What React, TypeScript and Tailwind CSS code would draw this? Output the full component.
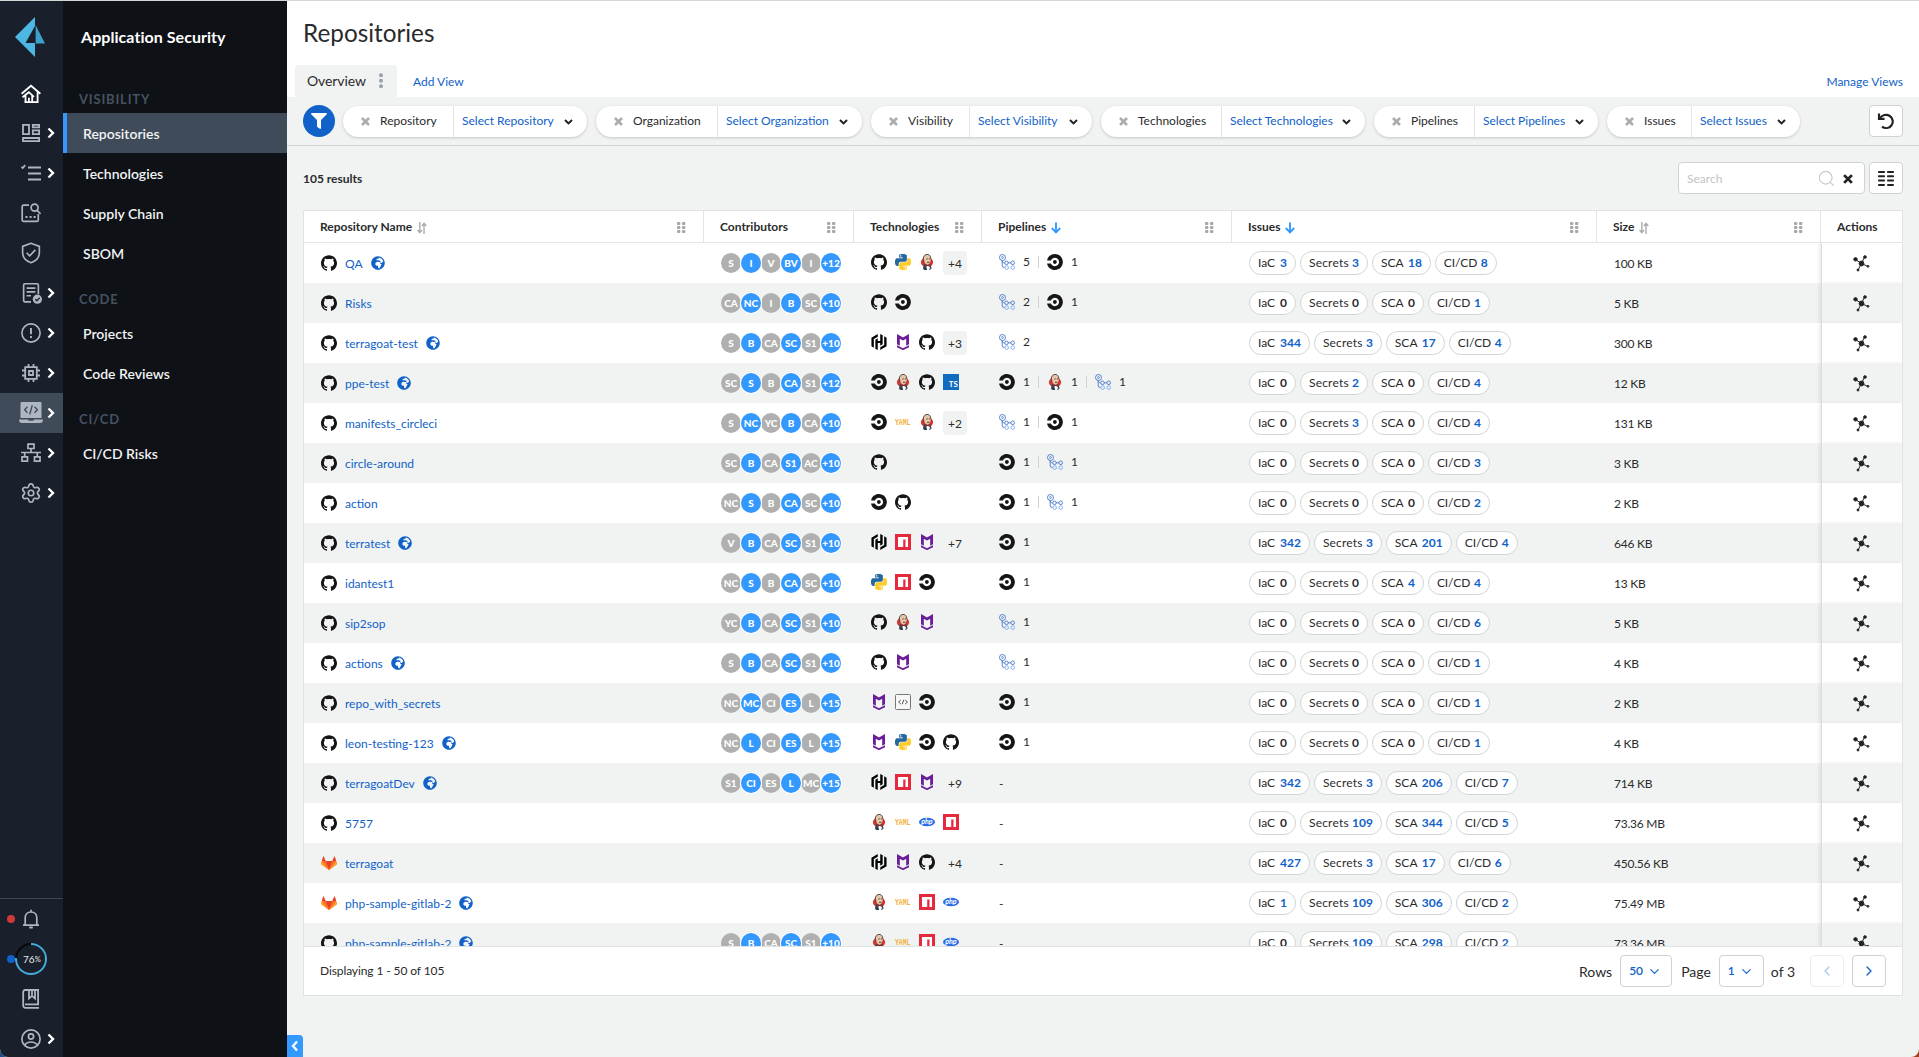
import React from "react";
import { SiHashicorp, SiCircleci, SiGithub } from "react-icons/si";
import { FaGlobeAfrica, FaFilter } from "react-icons/fa";
import { ChevronDown, ChevronLeft, ChevronRight, Search, Settings } from "lucide-react";

type P = { children: React.ReactNode; size?: number; sw?: number };
const Line = ({ children, size = 20, sw = 1.7 }: P) => (
  <svg width={size} height={size} viewBox="0 0 20 20" fill="none" stroke="currentColor" strokeWidth={sw} className="shrink-0">
    {children}
  </svg>
);

const Arrow = () => (
  <svg width="8" height="12" viewBox="0 0 8 12" fill="none" stroke="#fff" strokeWidth="2.4" className="ml-1 shrink-0">
    <path d="M1.500 1.500 6 6l-4.500 4.500" />
  </svg>
);

const Cross = ({ size, className }: { size: number; className?: string }) => (
  <svg width={size} height={size} viewBox="0 0 9 9" fill="none" stroke="currentColor" strokeWidth="2.500" className={`shrink-0 ${className ?? ""}`}>
    <path d="m1 1 7 7M8 1 1 8" />
  </svg>
);

const RAIL: { icon: React.ReactNode; arrow?: boolean; active?: boolean; white?: boolean }[] = [
  {
    white: true,
    icon: (
      <span className="pt-px">
        <Line sw={1.8}>
          <path d="M0.600 9.800 10 1.800l9.400 8M16.600 8v10.200H3.600" />
          <path d="M1.500 13.200 7.800 8.200l5.200 4.600M4.500 11.500v6.700M11.200 11.500v6.700M7.900 13.800v4.400" />
        </Line>
      </span>
    ),
  },
  {
    arrow: true,
    icon: (
      <Line sw={1.8}>
        <path d="M2 1.900h6v9.200H2zM11.800 1.900h6.300v2.400h-6.300zM11.800 7.400h6.300v3.700h-6.300zM2 15h16.100v3.200H2z" />
      </Line>
    ),
  },
  {
    arrow: true,
    icon: (
      <Line sw={1.8}>
        <path d="M7 4.500h13M7 10.500h13M7 16.500h13M0.400 4l1.300 1L4.200 2.200" />
      </Line>
    ),
  },
  {
    icon: (
      <Line sw={1.7}>
        <path d="M8 2.200H2.400a1.200 1.200 0 0 0-1.200 1.200v13.700a1.200 1.200 0 0 0 1.200 1.200h13.700a1.200 1.200 0 0 0 1.200-1.200V11" />
        <circle cx="13.600" cy="4.600" r="3.500" />
        <path d="M16 7.200 19.600 11" />
        <path d="M4.500 14h2M8.600 14h2M12.600 14h2" strokeWidth="2" />
      </Line>
    ),
  },
  {
    icon: (
      <Line size={22} sw={1.5}>
        <path d="M10 1.200 2.400 4v5.600c0 4.300 3 7.600 7.600 9.200 4.600-1.600 7.600-4.900 7.600-9.200V4z" />
        <path d="m6 9.800 2.800 2.700 5.200-5.300" />
      </Line>
    ),
  },
  {
    arrow: true,
    icon: (
      <Line size={22} sw={1.5}>
        <path d="M10 18H4.500A1.200 1.200 0 0 1 3.300 16.800V2.800A1.200 1.200 0 0 1 4.500 1.600h11a1.200 1.200 0 0 1 1.200 1.200v8M6 5.500h8M6 9h8M6 12.500h4" />
        <circle cx="15.800" cy="15.600" r="4.200" fill="currentColor" stroke="none" />
        <path d="m13.900 15.600 1.400 1.400 2.600-2.600" stroke="#19202b" strokeWidth="1.200" />
      </Line>
    ),
  },
  {
    arrow: true,
    icon: (
      <Line sw={1.6}>
        <circle cx="10" cy="10" r="9.100" />
        <path d="M10 5v6.200M10 13v2" strokeWidth="1.900" />
      </Line>
    ),
  },
  {
    arrow: true,
    icon: (
      <Line sw={1.8}>
        <path d="M4.200 4.200h11.600v11.600H4.200zM8 8h4v4H8z" />
        <path d="M7.500 1v3M12.500 1v3M7.500 16v3M12.500 16v3M1 7.500h3M1 12.500h3M16 7.500h3M16 12.500h3" />
      </Line>
    ),
  },
  {
    arrow: true,
    active: true,
    icon: (
      <svg width="24" height="22" viewBox="0 0 24 22" fill="none" className="shrink-0">
        <path d="M2.500 0h19a1 1 0 0 1 1 1v15h-21V1a1 1 0 0 1 1-1z" fill="#aeb6c4" />
        <path d="M0 17.500h9c.300 1 .800 1.200 1.500 1.200h3c.700 0 1.200-.200 1.500-1.200h9c0 2.500-1 3.500-3 3.500H3c-2 0-3-1-3-3.500z" fill="#aeb6c4" />
        <path d="M8.500 4.800 5.600 7.800l2.900 3M15.500 4.800l2.900 3-2.900 3M13.300 3.300l-2.600 9.200" stroke="#404b5a" strokeWidth="1.300" />
      </svg>
    ),
  },
  {
    arrow: true,
    icon: (
      <Line sw={1.7}>
        <path d="M7 1.200h6v4.300H7zM1 13.800h5.500v4.300H1zM13.500 13.800H19v4.300h-5.500zM10 5.500v4M0 9.500h20M3.700 9.500v4M16.300 9.500v4" />
      </Line>
    ),
  },
  { arrow: true, icon: <Settings size={22} strokeWidth={1.8} className="shrink-0" /> },
];

const RailItem = ({ icon, arrow, active, white }: { icon: React.ReactNode; arrow?: boolean; active?: boolean; white?: boolean }) => (
  <div className={`flex h-10 items-center ${active ? "bg-[#404b5a]" : ""} ${white ? "text-white" : "text-[#aeb6c4]"}`}>
    <div className="ml-[19px] flex w-6 justify-center">{icon}</div>
    {arrow && <Arrow />}
  </div>
);

const Rail = () => (
  <div className="flex w-[63px] shrink-0 flex-col justify-between bg-[#19202b]">
    <div className="flex flex-col">
      <svg width="30" height="40" viewBox="0 0 30 40" className="ml-[15px] mt-4">
        <path d="M20 0v9L10.500 26H20v14L0 20z" fill="#4db6e2" />
        <path d="M20.600 8 30 26.500h-9.400z" fill="#3d9fcb" />
      </svg>
      <div className="mt-4">
        {RAIL.map((r, i) => (
          <RailItem key={i} {...r} />
        ))}
      </div>
    </div>
    <div className="-mb-0.5 border-t border-[#3d4858]">
      <div className="flex h-10 items-center text-[#aeb6c4]">
        <span className="ml-[7px] size-2 rounded-full bg-[#cf3a38]" />
        <div className="ml-1 flex w-6 justify-center">
          <Line>
            <path d="M2 16.200h16M4.200 16V8.800C4.200 5.500 6.500 3 10 3s5.800 2.500 5.800 5.800V16M10 3V.8" />
            <path d="M8.200 18.500h3.600" strokeWidth="2" />
          </Line>
        </div>
      </div>
      <div className="flex h-10 items-center">
        <span className="ml-[7px] size-2 rounded-full bg-[#1062c8]" />
        <svg width="32" height="32" viewBox="0 0 32 32" fill="none">
          <circle cx="16" cy="16" r="15" stroke="#05070a" strokeWidth="2" />
          <circle cx="16" cy="16" r="15" stroke="#45aedd" strokeWidth="2" pathLength="100" strokeDasharray="76 24" transform="rotate(-90 16 16)" />
          <text x="8" y="20" fontSize="10" fill="#e8ebef" fontFamily="Lato, sans-serif">76</text>
          <text x="19.800" y="19" fontSize="7.500" fill="#e8ebef" fontFamily="Lato, sans-serif">%</text>
        </svg>
      </div>
      <div className="flex h-10 items-center text-[#aeb6c4]">
        <div className="ml-[19px] flex w-6 justify-center">
          <Line sw={1.8}>
            <path d="M18 18.800H4.200a2 2 0 0 1-2-2V3a2 2 0 0 1 2-2h12.900v14.300H4M8 1.500v8l3-2.600 3 2.600v-8M11 1v5" />
          </Line>
        </div>
      </div>
      <div className="flex h-10 items-center text-[#aeb6c4]">
        <div className="ml-[19px] flex w-6 justify-center">
          <Line sw={1.7}>
            <circle cx="10" cy="10" r="9.100" />
            <circle cx="10" cy="7.500" r="2.600" />
            <path d="M3.500 16.200c1.500-2.200 4-3.200 6.500-3.200s5 1 6.500 3.200" />
          </Line>
        </div>
        <Arrow />
      </div>
    </div>
  </div>
);

const NavItem = ({ label, active }: { label: string; active?: boolean }) => (
  <div className={`flex h-10 items-center border-l-4 pl-4 text-[14px] font-semibold text-[#f1f3f4] ${active ? "border-[#3399ff] bg-[#404b5a]" : "border-transparent"}`}>{label}</div>
);
const NavHead = ({ label }: { label: string }) => (
  <div className="flex h-10 items-center pl-4 text-[13px] font-bold tracking-[0.8px] text-[#465160]">{label}</div>
);

const NAV: [string, string[]][] = [
  ["VISIBILITY", ["Repositories", "Technologies", "Supply Chain", "SBOM"]],
  ["CODE", ["Projects", "Code Reviews"]],
  ["CI/CD", ["CI/CD Risks"]],
];

const SideNav = () => (
  <div className="w-[224px] shrink-0 bg-[#0e1116]">
    <div className="flex h-[72px] items-center pl-[18px] text-[16px] font-bold tracking-[0.05px] text-white">Application Security</div>
    {NAV.map(([head, items]) => (
      <div key={head} className="pt-[7px]">
        <NavHead label={head} />
        <div className="-mt-[7px]">
          {items.map((l) => (
            <NavItem key={l} label={l} active={l === "Repositories"} />
          ))}
        </div>
      </div>
    ))}
  </div>
);

const FILTERS: [string, number, number][] = [
  ["Repository", 111, 133],
  ["Organization", 122, 144],
  ["Visibility", 99, 122],
  ["Technologies", 121, 143],
  ["Pipelines", 101, 123],
  ["Issues", 85, 108],
];

const Filter = ({ label, w1, w2 }: { label: string; w1: number; w2: number }) => (
  <div className="flex h-[31px] items-center rounded-full bg-white shadow-[0_1px_3px_rgba(0,0,0,0.18)]">
    <div className="flex h-full items-center border-r border-[#e3e6e5] pl-[18px]" style={{ width: w1 }}>
      <Cross size={9} className="text-[#a9abac]" />
      <span className="ml-[10px]">{label}</span>
    </div>
    <div className="flex h-full items-center justify-between pl-2 pr-[14px]" style={{ width: w2 }}>
      <span className="text-[#1062c8]">Select {label}</span>
      <svg width="9" height="6" viewBox="0 0 9 6" fill="none" stroke="#222" strokeWidth="2" className="mt-0.5">
        <path d="m1 1 3.500 3.400L8 1" />
      </svg>
    </div>
  </div>
);

const Dots = () => (
  <svg width="9" height="12" viewBox="0 0 9 12" fill="#a6a8a9">
    {[0, 4, 8].map((y) => (
      <g key={y}>
        <rect x="0" y={y} width="3.400" height="3" rx="1" />
        <rect x="5" y={y} width="3.400" height="3" rx="1" />
      </g>
    ))}
  </svg>
);
const SortBoth = () => (
  <svg width="10" height="12" viewBox="0 0 10 12" fill="none" stroke="#aaacad" strokeWidth="1.400">
    <path d="M2.800 0v10.500M.5 8l2.300 2.600L5 8M7 12V1.500M4.800 4 7 1.400 9.300 4" />
  </svg>
);
const SortDown = () => (
  <svg width="10" height="12" viewBox="0 0 10 12" fill="none" stroke="#3399ff" strokeWidth="1.900">
    <path d="M5 .5v10M.8 6 5 10.300 9.200 6" />
  </svg>
);

const PY =
  "M14.25.18l.9.2.73.26.59.3.45.32.34.34.25.34.16.33.1.3.04.26.02.2-.01.13V8.5l-.05.63-.13.55-.21.46-.26.38-.3.31-.33.25-.35.19-.35.14-.33.1-.3.07-.26.04-.21.02H8.77l-.69.05-.59.14-.5.22-.41.27-.33.32-.27.35-.2.36-.15.37-.1.35-.07.32-.04.27-.02.21v3.06H3.17l-.21-.03-.28-.07-.32-.12-.35-.18-.36-.26-.36-.36-.35-.46-.32-.59-.28-.73-.21-.88-.14-1.05-.05-1.23.06-1.22.16-1.04.24-.87.32-.71.36-.57.4-.44.42-.33.42-.24.4-.16.36-.1.32-.05.24-.01h.16l.06.01h8.16v-.83H6.18l-.01-2.75-.02-.37.05-.34.11-.31.17-.28.25-.26.31-.23.38-.2.44-.18.51-.15.58-.12.64-.1.71-.06.77-.04.84-.02 1.27.05zm-6.3 1.98l-.23.33-.08.41.08.41.23.34.33.22.41.09.41-.09.33-.22.23-.34.08-.41-.08-.41-.23-.33-.33-.22-.41-.09-.41.09z";

const Icon = ({ k }: { k: string }) => {
  switch (k) {
    case "gh":
      return <SiGithub size={16} color="#161514" />;
    case "ci":
      return <SiCircleci size={16} color="#161616" />;
    case "ha":
      return <SiHashicorp size={16} color="#000" />;
    case "mc":
      return (
        <svg width="16" height="16" viewBox="0 0 16 16" fill="#6a1b9a">
          <path d="M2 0 8 3.600 14 0v10.200l-2.800 1.500V4.800L8 6.600 4.800 4.800v6.900L2 10.200z" />
          <path d="m2 11.200 6 3 6-3v2L8 16.200l-6-3z" />
        </svg>
      );
    case "py":
      return (
        <svg width="16" height="16" viewBox="0 0 24 24">
          <path d={PY} fill="#2369a0" />
          <path d={PY} fill="#ffcc2e" transform="rotate(180 12 12)" />
        </svg>
      );
    case "je":
      return (
        <svg width="16" height="16" viewBox="0 0 16 16">
          <ellipse cx="8" cy="8.300" rx="6.100" ry="5" fill="#cf3732" />
          <path d="M4 14.500 4.800 10.500h6.600l1.200 3.500L11 16H5.200z" fill="#2f4350" />
          <path d="M7.200 12h3.200l.6 2-.9 2H8.200z" fill="#fff" />
          <path d="M4.500 4.500C4.500 1.800 6 .4 8.200.4s3.500 1.600 3.500 4c0 3-.8 5.600-3.100 6.400C6.400 10.200 4.500 8 4.500 4.500z" fill="#e6c5a8" />
          <path d="M5.200 8.200C3.400 4.500 4.500.7 8 .4c2.400 0 3.700 1.300 3.900 4.600" fill="none" stroke="#4a3a38" strokeWidth=".9" />
          <path d="M7.400 4.900h1.300M9.900 4.900h1.100M8 8.300h2.400" stroke="#49372f" strokeWidth=".9" />
          <path d="m6.300 10.800 2.200.8 2.300-.9v2l-2.200-.7-2 .8z" fill="#a32d2b" />
        </svg>
      );
    case "ts":
      return <span className="flex size-4 items-end justify-end bg-[#0f6cbf] pr-px text-[8px] font-bold leading-[11px] text-white">TS</span>;
    case "ya":
      return (
        <svg width="16" height="16" viewBox="0 0 16 16" className="overflow-visible">
          <text x="0" y="11" fontSize="9" fontWeight="700" textLength="15.500" lengthAdjust="spacingAndGlyphs" fill="#f2b13c" fontFamily="Liberation Mono, monospace">YAML</text>
        </svg>
      );
    case "ph":
      return (
        <svg width="16" height="16" viewBox="0 0 16 16" className="overflow-visible">
          <ellipse cx="8" cy="8" rx="8" ry="4.300" fill="#2a6be8" />
          <text x="2.200" y="10" fontSize="7" fontWeight="700" fontStyle="italic" textLength="11.500" lengthAdjust="spacingAndGlyphs" fill="#fff" fontFamily="Lato, sans-serif">php</text>
        </svg>
      );
    case "np":
      return (
        <svg width="16" height="16" viewBox="0 0 16 16">
          <path d="M0 0h16v16H0z" fill="#e52a3d" />
          <path d="M3 3h10v10h-2.500V5.500H8.200V13H3z" fill="#fff" />
        </svg>
      );
    case "co":
      return (
        <svg width="16" height="16" viewBox="0 0 16 16" fill="none" stroke="#555">
          <rect x=".5" y=".5" width="15" height="15" rx="1" fill="#f7f7f7" stroke="#777" />
          <path d="M5.800 6 3.600 8l2.200 2M10.200 6l2.200 2-2.200 2M8.800 5.800 7.200 10.200" />
        </svg>
      );
    case "gl":
      return (
        <svg width="16" height="14" viewBox="0 0 16 14">
          <path d="M2.200.2 4.600 5h6.800L13.800.2 16 8 8 14 0 8z" fill="#fc6d26" />
          <path d="M2.500 0 4.700 5H1zM13.500 0l-2.200 5H15z" fill="#e24329" />
          <path d="M4.700 5h6.600L8 14z" fill="#e24329" />
          <path d="M1 5 0 8.300 8 14zM15 5l1 3.300L8 14z" fill="#fca326" />
          <path d="M1 5h3.700L8 14zM15 5h-3.700L8 14z" fill="#fc6d26" />
        </svg>
      );
    default:
      return (
        <svg width="16" height="16" viewBox="0 0 16 16" fill="none" stroke="#5580c8" strokeWidth="1">
          <circle cx="3.500" cy="3.500" r="3" />
          <path d="M2.900 2.300v2.400l1.900-1.200z" strokeWidth=".7" />
          <path d="M3.200 6.500v5a2 2 0 0 0 2 2h.6M3.200 6.500c0 1.500.8 2.300 2.400 2.300M9.300 8.800h2.500" />
          <circle cx="7.500" cy="8.800" r="1.800" />
          <circle cx="13.700" cy="8.800" r="1.800" />
          <circle cx="7.700" cy="13.600" r="1.800" stroke="#7fb0ea" />
          <circle cx="13.700" cy="13.600" r="1.800" stroke="#7fb0ea" />
        </svg>
      );
  }
};

type Row = { n: string; pub?: boolean; gl?: boolean; c?: string; t: string; more?: string; p?: string; i: number[]; s: string };
const ROWS: Row[] = [
  { n: "QA", pub: true, c: "S I V BV I +12", t: "gh py je", more: "+4", p: "ga5 ci1", i: [3, 3, 18, 8], s: "100 KB" },
  { n: "Risks", c: "CA NC I B SC +10", t: "gh ci", p: "ga2 ci1", i: [0, 0, 0, 1], s: "5 KB" },
  { n: "terragoat-test", pub: true, c: "S B CA SC S1 +10", t: "ha mc gh", more: "+3", p: "ga2", i: [344, 3, 17, 4], s: "300 KB" },
  { n: "ppe-test", pub: true, c: "SC S B CA S1 +12", t: "ci je gh ts", p: "ci1 je1 ga1", i: [0, 2, 0, 4], s: "12 KB" },
  { n: "manifests_circleci", c: "S NC YC B CA +10", t: "ci ya je", more: "+2", p: "ga1 ci1", i: [0, 3, 0, 4], s: "131 KB" },
  { n: "circle-around", c: "SC B CA S1 AC +10", t: "gh", p: "ci1 ga1", i: [0, 0, 0, 3], s: "3 KB" },
  { n: "action", c: "NC S B CA SC +10", t: "ci gh", p: "ci1 ga1", i: [0, 0, 0, 2], s: "2 KB" },
  { n: "terratest", pub: true, c: "V B CA SC S1 +10", t: "ha np mc", more: "+7", p: "ci1", i: [342, 3, 201, 4], s: "646 KB" },
  { n: "idantest1", c: "NC S B CA SC +10", t: "py np ci", p: "ci1", i: [0, 0, 4, 4], s: "13 KB" },
  { n: "sip2sop", c: "YC B CA SC S1 +10", t: "gh je mc", p: "ga1", i: [0, 0, 0, 6], s: "5 KB" },
  { n: "actions", pub: true, c: "S B CA SC S1 +10", t: "gh mc", p: "ga1", i: [0, 0, 0, 1], s: "4 KB" },
  { n: "repo_with_secrets", c: "NC MC CI ES L +15", t: "mc co ci", p: "ci1", i: [0, 0, 0, 1], s: "2 KB" },
  { n: "leon-testing-123", pub: true, c: "NC L CI ES L +15", t: "mc py ci gh", p: "ci1", i: [0, 0, 0, 1], s: "4 KB" },
  { n: "terragoatDev", pub: true, c: "S1 CI ES L MC +15", t: "ha np mc", more: "+9", i: [342, 3, 206, 7], s: "714 KB" },
  { n: "5757", t: "je ya ph np", i: [0, 109, 344, 5], s: "73.36 MB" },
  { n: "terragoat", gl: true, t: "ha mc gh", more: "+4", i: [427, 3, 17, 6], s: "450.56 KB" },
  { n: "php-sample-gitlab-2", pub: true, gl: true, t: "je ya np ph", i: [1, 109, 306, 2], s: "75.49 MB" },
  { n: "php-sample-gitlab-2", pub: true, c: "S B CA SC S1 +10", t: "je ya np ph", i: [0, 109, 298, 2], s: "73.36 MB" },
];
const KINDS: [string, string][] = [
  ["IaC", "w-[18px]"],
  ["Secrets", "w-[39px] tracking-[0.2px]"],
  ["SCA", "w-[23px]"],
  ["CI/CD", "w-[33px] tracking-[-0.1px]"],
];
const GRID = "grid grid-cols-[400px_150px_128px_250px_365px_224px_81px]";

const HeadCell = ({ label, sort }: { label: string; sort?: React.ReactNode }) => (
  <div className="flex h-full items-center justify-between border-r border-[#e4e6e6] pl-4 pr-[17px] pt-px">
    <div className="flex items-center gap-[5px]">
      <span>{label}</span>
      <span className="pt-0.5">{sort}</span>
    </div>
    <span className="pt-0.5"><Dots /></span>
  </div>
);

const TableRow = ({ r, i }: { r: Row; i: number }) => (
  <div className={`${GRID} h-10 shrink-0 items-center ${i % 2 ? "bg-[#f1f3f3]" : "bg-white"}`}>
    <div className="flex items-center pl-[17px]">
      <Icon k={r.gl ? "gl" : "gh"} />
      <span className="ml-2 pt-0.5 text-[#1062c8]">{r.n}</span>
      {r.pub && <FaGlobeAfrica size={14} color="#1062c8" className="ml-2" />}
    </div>
    <div className="flex pl-[17px]">
      {r.c?.split(" ").map((c, j) => (
        <span
          key={j}
          className={`flex size-5 items-center justify-center rounded-full pt-px text-[10px] font-black text-white ${j % 2 ? "relative bg-[#3399ff] ring-1 ring-white" : "bg-[#b0b0b0]"}`}
        >
          {c}
        </span>
      ))}
    </div>
    <div className="flex items-center gap-2 pl-[17px]">
      {r.t.split(" ").map((t) => (
        <span key={t} className="-mt-0.5"><Icon k={t} /></span>
      ))}
      {r.more && <span className="flex size-6 items-center justify-center rounded bg-[#f1f3f3] pt-px">{r.more}</span>}
    </div>
    {r.p ? (
      <div className="flex items-center pb-0.5 pl-[17px]">
        {r.p.split(" ").map((p, j) => (
          <div key={p} className="flex items-center">
            {j > 0 && <span className="mr-2 h-3 w-px bg-[#d0d3d3]" />}
            <Icon k={p.slice(0, 2)} />
            <span className="ml-2 w-[15px]">{p.slice(2)}</span>
          </div>
        ))}
      </div>
    ) : (
      <div className="pl-[17px] pt-0.5">-</div>
    )}
    <div className="flex gap-1 pl-[17px]">
      {r.i.map((v, j) => (
        <span key={j} className="flex h-6 items-center gap-1 rounded-full border border-[#d3d6d6] bg-white px-2 whitespace-pre">
          <span className={KINDS[j][1]}>{KINDS[j][0]}</span>
          <b className={v ? "font-bold text-[#1062c8]" : "font-bold"}>{v}</b>
        </span>
      ))}
    </div>
    <div className="pl-[17px] pt-0.5 tracking-[-0.25px]">{r.s}</div>
    <div className="flex h-full items-center border-l border-[#dcdede] pl-[31px] shadow-[-2px_0_3px_rgba(0,0,0,0.08)]">
      <svg width="17" height="17" viewBox="0 0 17 17" fill="#222" stroke="#222" strokeWidth="1">
        <path d="m8.500 8.500-6-4M8.500 8.500l3-6.500M8.500 8.500l6.500 3M8.500 8.500 5 15" fill="none" />
        <circle cx="8.500" cy="8.500" r="2.400" />
        <circle cx="2.500" cy="4.300" r="1.700" />
        <circle cx="12" cy="2" r="1.300" />
        <circle cx="15" cy="11.300" r=".9" />
        <circle cx="5" cy="15" r="1" />
      </svg>
    </div>
  </div>
);

export default function App() {
  return (
    <div className="h-[1057px] w-[1919px] overflow-hidden bg-linear-to-r from-[#1d4f8f] to-[#a3401f] font-['Lato',sans-serif] text-[12px] text-[#2a2b2c]">
      <div className="flex h-full overflow-hidden rounded-b-[8px] border-t border-[#d3d6d6] bg-[#f1f3f3]">
        <Rail />
        <SideNav />
        <div className="relative flex min-w-0 flex-1 flex-col">
          <div className="flex h-24 flex-col justify-between bg-white">
            <h1 className="pl-4 pt-4 text-[24.300px] leading-8">Repositories</h1>
            <div className="flex h-8 items-center pl-2 pr-4">
              <div className="flex h-8 w-[102px] items-center rounded-t bg-[#f1f3f3] pl-3 text-[14px]">
                <span className="pb-px tracking-[-0.1px]">Overview</span>
                <svg width="4" height="16" viewBox="0 0 4 16" fill="#98a1ad" className="ml-[13px]">
                  <circle cx="2" cy="2.300" r="2" />
                  <circle cx="2" cy="7.800" r="2" />
                  <circle cx="2" cy="13.300" r="2" />
                </svg>
              </div>
              <span className="ml-4 pt-px text-[#1062c8]">Add View</span>
              <span className="ml-auto pt-px text-[#1062c8]">Manage Views</span>
            </div>
          </div>
          <div className="flex h-[49px] items-center border-b border-[#d3d6d6] pl-4 pr-4">
            <div className="flex size-8 items-center justify-center rounded-full bg-[#1062c8] text-white">
              <FaFilter size={16} />
            </div>
            <div className="ml-2 flex gap-[9px]">
              {FILTERS.map(([l, a, b]) => (
                <Filter key={l} label={l} w1={a} w2={b} />
              ))}
            </div>
            <div className="ml-auto flex h-8 w-[34px] items-center justify-center rounded border border-[#d0d3d3] bg-white">
              <svg width="18" height="18" viewBox="0 0 18 18" fill="none" stroke="#222" strokeWidth="2.200">
                <path d="M2 1.500v5.300h5.500" />
                <path d="M2.500 6.500C5 2.800 9.500 1.800 12.800 4c3.200 2.200 4 6.500 1.600 9.500-2.200 2.800-6.200 3.300-9.400 1.300" />
              </svg>
            </div>
          </div>
          <div className="flex h-16 items-center justify-between px-4">
            <span className="pt-px font-bold">105 results</span>
            <div className="flex gap-1">
              <div className="flex h-8 w-[187px] items-center rounded border border-[#d0d3d3] bg-white pl-2 pr-[11px] text-[#c3c5c6]">
                <span className="flex-1 pt-px">Search</span>
                <Search size={19} strokeWidth={1.5} className="text-[#c8cacb]" />
                <Cross size={10} className="ml-[7px] mt-0.5 text-[#222]" />
              </div>
              <div className="flex h-8 w-[34px] items-center justify-center rounded border border-[#d0d3d3] bg-white">
                <svg width="16" height="15" viewBox="0 0 16 15" fill="#222">
                  {[0, 4.3, 8.6, 12.9].map((y) => (
                    <g key={y}>
                      <rect x="0" y={y} width="7" height="2" rx=".8" />
                      <rect x="9" y={y} width="7" height="2" rx=".8" />
                    </g>
                  ))}
                </svg>
              </div>
            </div>
          </div>
          <div className="mx-4 flex h-[786px] flex-col border border-[#e0e3e3] bg-white">
            <div className={`${GRID} h-8 shrink-0 items-center border-b border-[#e4e6e6] font-bold`}>
              <HeadCell label="Repository Name" sort={<SortBoth />} />
              <HeadCell label="Contributors" />
              <HeadCell label="Technologies" />
              <HeadCell label="Pipelines" sort={<SortDown />} />
              <HeadCell label="Issues" sort={<SortDown />} />
              <HeadCell label="Size" sort={<SortBoth />} />
              <span className="pl-4 pt-px">Actions</span>
            </div>
            <div className="flex min-h-0 flex-1 flex-col overflow-hidden">
              {ROWS.map((r, i) => (
                <TableRow key={i} r={r} i={i} />
              ))}
            </div>
            <div className="flex h-[49px] shrink-0 items-center border-t border-[#e0e3e3] pl-4 pr-4 text-[14px]">
              <span className="mr-auto text-[12px] tracking-[-0.1px]">Displaying 1 - 50 of 105</span>
              <span>Rows</span>
              <div className="ml-2 flex h-8 w-[52px] items-center justify-between rounded border border-[#d0d3d3] pl-2 pr-[9px] text-[12px] font-semibold text-[#1062c8]">
                50 <ChevronDown size={15} strokeWidth={1.8} />
              </div>
              <span className="ml-[9px]">Page</span>
              <div className="ml-2 flex h-8 w-[45px] items-center justify-between rounded border border-[#d0d3d3] pl-2 pr-[9px] text-[12px] font-semibold text-[#1062c8]">
                1 <ChevronDown size={15} strokeWidth={1.8} />
              </div>
              <span className="ml-[7px]">of 3</span>
              <div className="ml-[15px] flex h-8 w-[34px] items-center justify-center rounded border border-[#eceeee] text-[#a9c8ec]">
                <ChevronLeft size={16} />
              </div>
              <div className="ml-2 flex h-8 w-[34px] items-center justify-center rounded border border-[#d0d3d3] text-[#1062c8]">
                <ChevronRight size={16} />
              </div>
            </div>
          </div>
          <div className="absolute bottom-0 left-0 flex h-[22px] w-4 items-center justify-center rounded-tr bg-[#3399ff] text-white">
            <svg width="8" height="12" viewBox="0 0 8 12" fill="none" stroke="#fff" strokeWidth="2.300">
              <path d="M6 1.500 2 6l4 4.500" />
            </svg>
          </div>
        </div>
      </div>
    </div>
  );
}
